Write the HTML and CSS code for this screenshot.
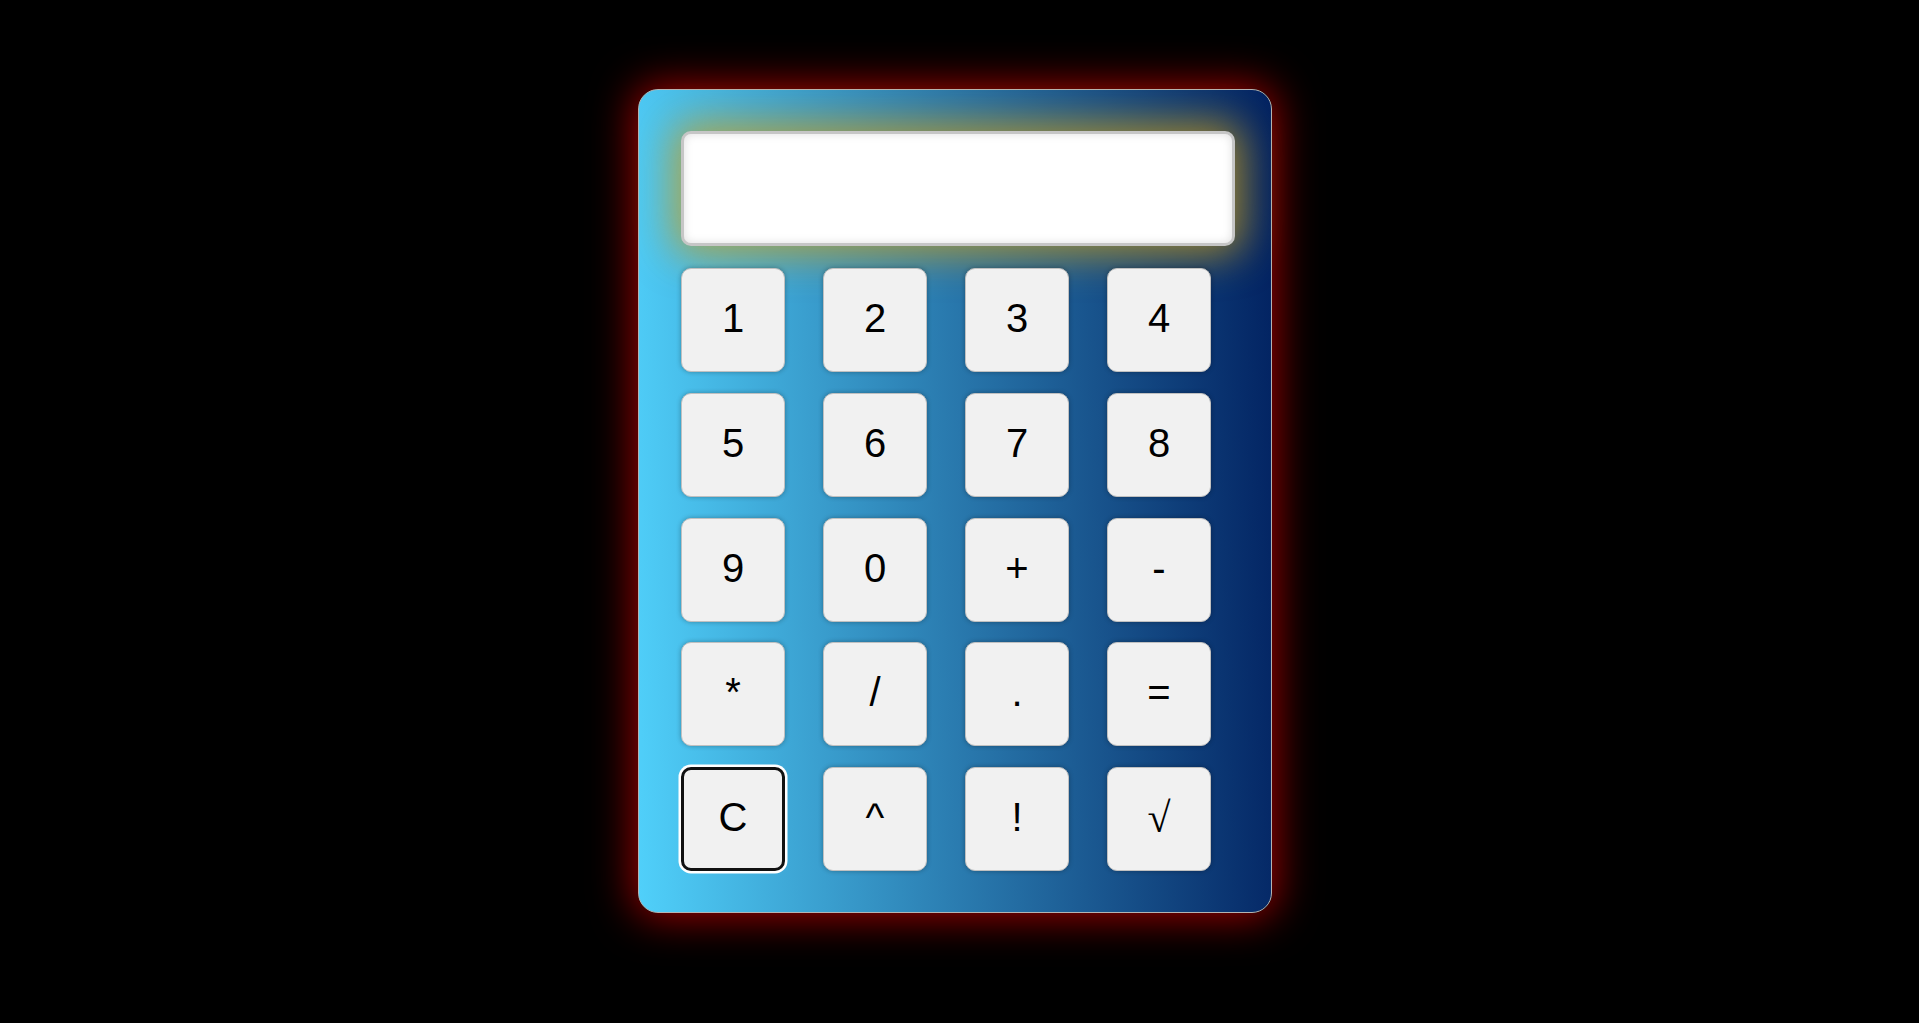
FILE: index.html
```html
<!DOCTYPE html>
<html lang="en">
<head>
<meta charset="utf-8">
<title>Calculator</title>
<link rel="stylesheet" href="styles.css">
</head>
<body>
<div class="calculator">
  <div class="display"></div>
  <div class="keys">
    <button class="key">1</button>
    <button class="key">2</button>
    <button class="key">3</button>
    <button class="key">4</button>
    <button class="key">5</button>
    <button class="key">6</button>
    <button class="key">7</button>
    <button class="key">8</button>
    <button class="key">9</button>
    <button class="key">0</button>
    <button class="key">+</button>
    <button class="key">-</button>
    <button class="key">*</button>
    <button class="key">/</button>
    <button class="key">.</button>
    <button class="key">=</button>
    <button class="key key-focused">C</button>
    <button class="key">^</button>
    <button class="key">!</button>
    <button class="key key-root">√</button>
  </div>
</div>
</body>
</html>
```
FILE: styles.css
```css
html, body {
  margin: 0;
  background: #000;
}
body {
  width: 1919px;
  height: 1023px;
  box-sizing: border-box;
  padding: 89px 0 0 638px;
  font-family: "Liberation Sans", Arial, sans-serif;
  overflow: hidden;
}
.calculator {
  width: 634px;
  height: 824px;
  box-sizing: border-box;
  padding: 41px 35px 41px 42px;
  border: 1px solid #b4b4b4;
  border-radius: 20px;
  background: linear-gradient(88deg, #50d0fa, #022261);
  box-shadow: 0 0 42px 4px rgba(200, 0, 0, 0.8);
}
.display {
  width: 554px;
  height: 115px;
  box-sizing: border-box;
  border: 3px solid #c6c6c6;
  border-radius: 10px;
  background: #fff;
  box-shadow: 0 0 40px 8px rgba(210, 160, 20, 0.75), inset 0 0 10px rgba(0, 0, 0, 0.13);
}
.keys {
  margin-top: 22px;
  display: grid;
  grid-template-columns: repeat(4, 104px);
  grid-auto-rows: 104px;
  column-gap: 38px;
  row-gap: 20.75px;
}
.key {
  width: 104px;
  height: 104px;
  box-sizing: border-box;
  margin: 0;
  padding: 0 0 3px 0;
  display: flex;
  align-items: center;
  justify-content: center;
  border: 1px solid #c0c0c0;
  border-radius: 10px;
  background: #f1f1f1;
  color: #000;
  font-family: "Liberation Sans", Arial, sans-serif;
  font-size: 40px;
  box-shadow: 0 0 5px rgba(0, 0, 0, 0.3);
}
.key-root {
  font-family: "Liberation Serif", "Times New Roman", serif;
  font-size: 42px;
}
.key-focused {
  border: 3px solid #111;
  box-shadow: 0 0 0 2.5px #fff;
}
```
